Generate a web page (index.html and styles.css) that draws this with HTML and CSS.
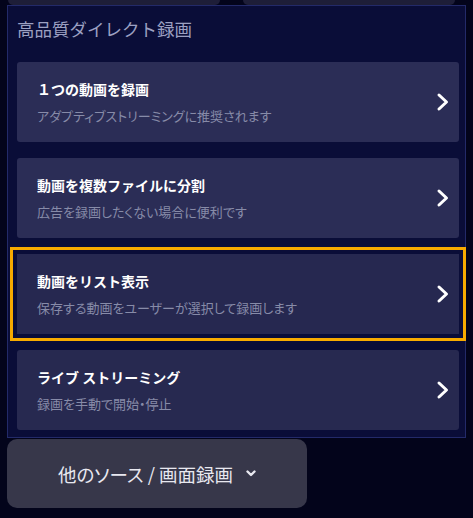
FILE: index.html
```html
<!DOCTYPE html>
<html lang="ja">
<head>
<meta charset="utf-8">
<link rel="stylesheet" href="styles.css">
</head>
<body>
<div class="top-row">
  <div class="top-btn"></div>
  <div class="top-btn"></div>
</div>
<div class="panel">
  <div class="panel-title">高品質ダイレクト録画</div>
  <div class="cards">
    <div class="card">
      <div class="card-text">
        <div class="card-title">１つの動画を録画</div>
        <div class="card-sub">アダプティブストリーミングに推奨されます</div>
      </div>
      <svg class="chev" viewBox="0 0 14 20" width="14" height="20"><path d="M3 3 L10.5 10 L3 17" fill="none" stroke="#fff" stroke-width="3" stroke-linecap="round" stroke-linejoin="round"/></svg>
    </div>
    <div class="card">
      <div class="card-text">
        <div class="card-title">動画を複数ファイルに分割</div>
        <div class="card-sub">広告を録画したくない場合に便利です</div>
      </div>
      <svg class="chev" viewBox="0 0 14 20" width="14" height="20"><path d="M3 3 L10.5 10 L3 17" fill="none" stroke="#fff" stroke-width="3" stroke-linecap="round" stroke-linejoin="round"/></svg>
    </div>
    <div class="card card-active">
      <div class="card-text">
        <div class="card-title">動画をリスト表示</div>
        <div class="card-sub">保存する動画をユーザーが選択して録画します</div>
      </div>
      <svg class="chev" viewBox="0 0 14 20" width="14" height="20"><path d="M3 3 L10.5 10 L3 17" fill="none" stroke="#fff" stroke-width="3" stroke-linecap="round" stroke-linejoin="round"/></svg>
    </div>
    <div class="card card-dark">
      <div class="card-text">
        <div class="card-title">ライブ ストリーミング</div>
        <div class="card-sub">録画を手動で開始・停止</div>
      </div>
      <svg class="chev" viewBox="0 0 14 20" width="14" height="20"><path d="M3 3 L10.5 10 L3 17" fill="none" stroke="#fff" stroke-width="3" stroke-linecap="round" stroke-linejoin="round"/></svg>
    </div>
  </div>
</div>
<div class="other-btn">
  <span>他のソース / 画面録画</span>
  <svg class="down" viewBox="0 0 10 7" width="10" height="7"><path d="M1.5 1.5 L5 5 L8.5 1.5" fill="none" stroke="#e8e8f0" stroke-width="2.4" stroke-linecap="round" stroke-linejoin="round"/></svg>
</div>
</body>
</html>
```
FILE: styles.css
```css
html, body {
  margin: 0;
  padding: 0;
}
body {
  background: #03041b;
  font-family: "Noto Sans CJK JP", "Noto Sans", sans-serif;
  width: 473px;
  height: 518px;
  overflow: hidden;
}
.top-row {
  display: flex;
  gap: 23px;
  padding-left: 8px;
  height: 5px;
}
.top-btn {
  width: 212px;
  height: 5px;
  background: #1e1e38;
  border-radius: 0 0 8px 8px;
}
.panel {
  margin-left: 7px;
  width: 457px;
  border: 1px solid #232a69;
  background: #0a0d38;
  padding: 11px 0 7px 0;
}
.panel-title {
  padding-left: 9px;
  font-size: 17.5px;
  line-height: 24px;
  color: #9ca0c2;
  margin-bottom: 21px;
}
.cards {
  display: flex;
  flex-direction: column;
  gap: 16px;
  padding-left: 9px;
}
.card {
  width: 442px;
  height: 80px;
  box-sizing: border-box;
  background: #2b2d56;
  border-radius: 3px;
  display: flex;
  align-items: center;
  padding: 0 9px 0 20px;
}
.card-active {
  background: #262850;
  border-radius: 0;
  outline: 3px solid #f7aa00;
  outline-offset: 4px;
}
.card-dark {
  background: #272950;
}
.card-text {
  flex: 1;
  padding-top: 1px;
}
.card-title {
  font-size: 14px;
  font-weight: 700;
  line-height: 20px;
  color: #ffffff;
}
.card-sub {
  margin-top: 7px;
  font-size: 13px;
  line-height: 20px;
  color: #878ba8;
  font-feature-settings: "palt";
}
.chev {
  display: block;
  flex: none;
}
.other-btn {
  margin: 1px 0 0 7px;
  width: 300px;
  height: 69px;
  background: #37374a;
  border-radius: 10px;
  display: flex;
  align-items: center;
  justify-content: center;
  gap: 13px;
  color: #e8e8f0;
  font-size: 18.5px;
  font-feature-settings: "palt";
}
.other-btn span {
  line-height: 24px;
}
.down {
  display: block;
}
```
